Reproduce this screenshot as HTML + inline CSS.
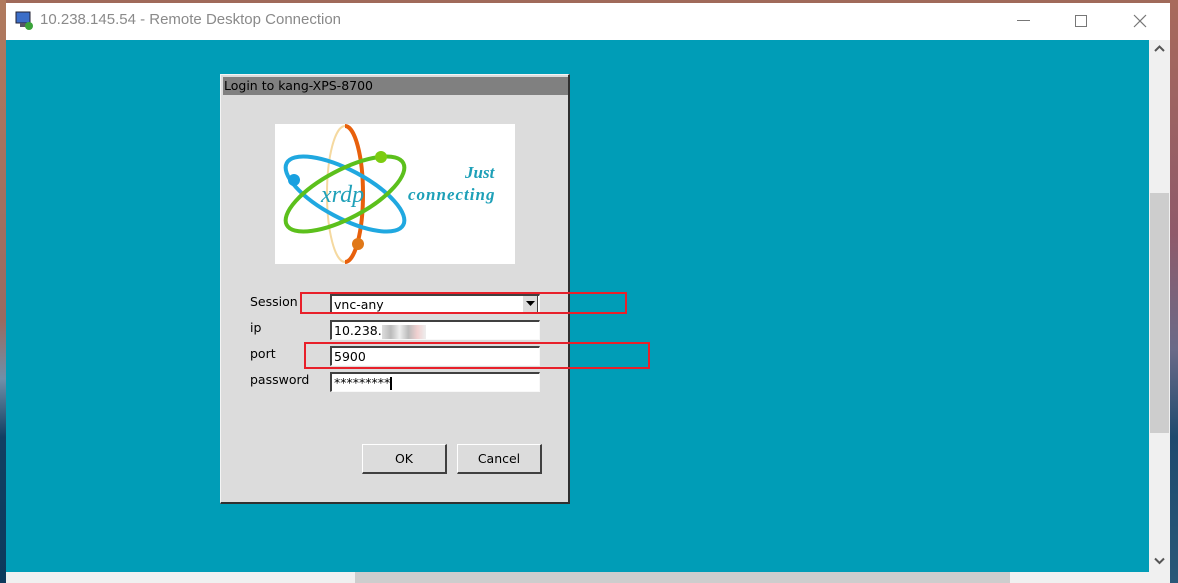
<!DOCTYPE html>
<html><head><meta charset="utf-8"><style>
*{margin:0;padding:0;box-sizing:border-box}
body{width:1178px;height:583px;overflow:hidden;position:relative;background:#a06a5a;font-family:"DejaVu Sans","Liberation Sans",sans-serif}
.abs{position:absolute}
.wpL{left:0;top:0;width:6px;height:583px;background:linear-gradient(#b07a5e 0,#9a6a60 55%,#6f8fa8 65%,#123f62 75%,#0c3a5c 100%)}
.wpR{left:1170px;top:0;width:8px;height:583px;background:linear-gradient(#a86a5c 0,#8f5a6a 40%,#6a6a88 60%,#1e4a6e 75%,#2a5878 100%)}
.title{left:6px;top:3px;width:1164px;height:37px;background:#fff}
.ttext{left:40px;top:11px;font-family:"Liberation Sans",sans-serif;font-size:15px;color:#8a8a8a}
.teal{left:6px;top:40px;width:1143px;height:532px;background:#009db7}
.vs{left:1149px;top:40px;width:21px;height:532px;background:#f0f0f0}
.hs{left:6px;top:572px;width:1164px;height:11px;background:#f0f0f0}
.dlg{left:220px;top:74px;width:350px;height:430px;background:#dcdcdc;border:1px solid #f4f4f4;border-right:2px solid #303030;border-bottom:2px solid #303030}
.dtitle{left:2px;top:2px;width:345px;height:18px;background:#808080;font-size:12.5px;color:#000;padding-left:1px;line-height:18px}
.lbl{font-size:12.5px;color:#000}
.inp{background:#fff;border-top:2px solid #404040;border-left:2px solid #404040;border-bottom:1px solid #f8f8f8;border-right:1px solid #f8f8f8;height:20px;width:210px;font-size:12.5px;line-height:17px;padding-left:2px}
.btn{background:#dcdcdc;border:1px solid #fff;border-right:2px solid #404040;border-bottom:2px solid #404040;width:85px;height:30px;font-size:12.5px;text-align:center;line-height:28px}
.red{border:2px solid #e8202a}
</style></head><body>
<div class="abs wpL"></div><div class="abs wpR"></div>
<div class="abs title"></div>
<svg class="abs" style="left:15px;top:11px" width="20" height="20"><rect x="1" y="1" width="14" height="11" fill="#3c6ec8" stroke="#223"/><rect x="5" y="12" width="8" height="4" fill="#556"/><circle cx="14" cy="15" r="4" fill="#3aa33a"/></svg>
<div class="abs ttext">10.238.145.54 - Remote Desktop Connection</div>
<div class="abs" style="left:1017px;top:20px;width:13px;height:1px;background:#777"></div>
<div class="abs" style="left:1075px;top:15px;width:12px;height:12px;border:1px solid #777"></div>
<svg class="abs" style="left:1133px;top:14px" width="14" height="14"><path d="M1 1L13 13M13 1L1 13" stroke="#777" stroke-width="1.2"/></svg>
<div class="abs teal"></div>
<div class="abs vs"><div class="abs" style="left:1px;top:153px;width:19px;height:240px;background:#cdcdcd"></div>
<svg class="abs" style="left:5px;top:5px" width="11" height="8"><path d="M1 6L5.5 1.5L10 6" stroke="#555" stroke-width="2" fill="none"/></svg>
<svg class="abs" style="left:5px;top:517px" width="11" height="8"><path d="M1 1.5L5.5 6L10 1.5" stroke="#555" stroke-width="2" fill="none"/></svg></div>
<div class="abs hs"><div class="abs" style="left:349px;top:0;width:655px;height:11px;background:#cdcdcd"></div></div>

<div class="abs dlg">
<div class="abs dtitle">Login to kang-XPS-8700</div>
<svg class="abs" style="left:54px;top:49px" width="240" height="140">
<rect width="240" height="140" fill="#fff"/>
<ellipse cx="70" cy="70" rx="18" ry="68" fill="none" stroke="#f5d9a0" stroke-width="2"/>
<path d="M70 2 A18 68 0 0 1 70 138" fill="none" stroke="#e8600c" stroke-width="4"/>
<ellipse cx="70" cy="70" rx="66" ry="24" transform="rotate(28 70 70)" fill="none" stroke="#20a8e0" stroke-width="4"/>
<ellipse cx="70" cy="70" rx="66" ry="24" transform="rotate(-28 70 70)" fill="none" stroke="#5cc01c" stroke-width="4"/>
<circle cx="106" cy="33" r="6" fill="#7ccc10"/><circle cx="19" cy="56" r="6" fill="#18a0e0"/><circle cx="83" cy="120" r="6" fill="#e07818"/>
<text x="46" y="78" font-family="Liberation Serif,serif" font-style="italic" font-size="24" fill="#1ea0b8">xrdp</text>
<text x="190" y="54" font-family="Liberation Serif,serif" font-style="italic" font-weight="bold" font-size="17" fill="#1ea0b8">Just</text>
<text x="133" y="76" font-family="Liberation Serif,serif" font-style="italic" font-weight="bold" font-size="17" letter-spacing="1" fill="#1ea0b8">connecting</text>
</svg>
<div class="abs lbl" style="left:29px;top:219px">Session</div>
<div class="abs lbl" style="left:29px;top:245px">ip</div>
<div class="abs lbl" style="left:29px;top:271px">port</div>
<div class="abs lbl" style="left:29px;top:297px">password</div>
<div class="abs inp" style="left:109px;top:219px">vnc-any<div class="abs" style="right:1px;top:0;width:16px;height:17px;background:#dcdcdc;border-left:1px solid #fff;border-right:1px solid #404040;border-bottom:1px solid #404040"><svg width="14" height="14"><path d="M3 5H12L7.5 10Z" fill="#000"/></svg></div></div>
<div class="abs inp" style="left:109px;top:245px">10.238.<span style="display:inline-block;width:44px;height:14px;vertical-align:middle;background:linear-gradient(90deg,#ddd,#bbb,#eee,#bbb,#f0d0d0,#eee)"></span></div>
<div class="abs inp" style="left:109px;top:271px">5900</div>
<div class="abs inp" style="left:109px;top:297px">*********<span style="display:inline-block;width:2px;height:13px;background:#000;vertical-align:middle"></span></div>
<div class="abs btn" style="left:141px;top:369px">OK</div>
<div class="abs btn" style="left:236px;top:369px">Cancel</div>
</div>
<div class="abs red" style="left:300px;top:292px;width:327px;height:22px"></div>
<div class="abs red" style="left:304px;top:342px;width:346px;height:27px"></div>
</body></html>
